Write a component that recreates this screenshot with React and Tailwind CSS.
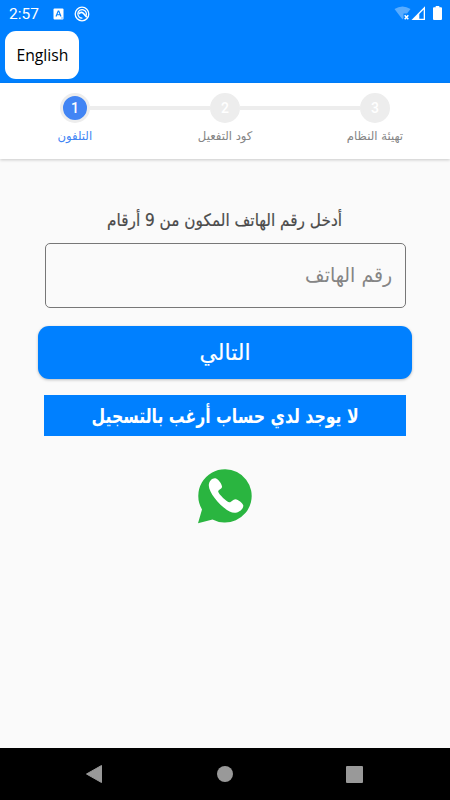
import React from 'react'
import clsx from 'clsx'

const steps = [
  { id: 1, label: 'التلفون' },
  { id: 2, label: 'كود التفعيل' },
  { id: 3, label: 'تهيئة النظام' },
]

function StatusBar() {
  return (
    <div className="flex h-7 items-center pr-2 pl-[9px] text-white">
      <span className="w-[31px] pt-px font-[Roboto] text-[15.5px] leading-none whitespace-nowrap">2:57</span>
      <svg className="ml-[13px]" width="11" height="12" viewBox="0 0 11 12">
        <rect x="0.5" y="0.5" width="10" height="11" rx="1" fill="#fff" />
        <path d="M3 8.5L5.2 3h.6L8 8.5M3.8 6.8h3.4M8.5 10h1" fill="none" stroke="#0080ff" strokeWidth="1.1" />
      </svg>
      <svg className="mb-px ml-[10px]" width="16" height="16" viewBox="0 0 16 16" fill="none" stroke="#fff">
        <circle cx="8" cy="8" r="6.8" strokeWidth="1.3" />
        <path d="M12 9.8A4.3 4.3 0 1 0 8.4 12.2" strokeWidth="1.3" />
        <path d="M4.8 8Q7.5 4.8 9.8 7.8L12.8 11.3" strokeWidth="1.7" />
      </svg>
      <div className="mb-[2px] ml-auto flex items-center">
        <svg width="17" height="15" viewBox="0 0 17 15">
          <path d="M0.5 3Q8.5-2.2 16.5 3L13 7.5H9.5V12L8.5 13.5Z" fill="#fff" fillOpacity="0.35" />
          <path d="M10.7 9.2l3.6 4M14.3 9.2l-3.6 4" stroke="#fff" strokeWidth="1.5" />
        </svg>
        <svg width="15" height="15" viewBox="0 0 15 15">
          <path d="M0.5 14H14V0.3Z" fill="#fff" />
          <path d="M8.3 8L12.7 3.4V12.7H8.3Z" fill="#0080ff" />
        </svg>
        <svg className="ml-[7px]" width="9" height="14" viewBox="0 0 9 14">
          <path d="M2.7 0h3.6v1.3H8a1 1 0 0 1 1 1V13a1 1 0 0 1-1 1H1a1 1 0 0 1-1-1V2.3a1 1 0 0 1 1-1h1.7Z" fill="#fff" />
        </svg>
      </div>
    </div>
  )
}

function Header() {
  return (
    <header className="h-[83px] bg-[#0080ff]">
      <StatusBar />
      <button className="mt-[3px] ml-[5px] flex h-[47.5px] w-[74px] items-center justify-center rounded-[11px] bg-white font-['Open_Sans'] text-[16px] text-black">
        <span className="scale-x-[0.98]">English</span>
      </button>
    </header>
  )
}

function Stepper() {
  return (
    <div className="grid h-[76px] grid-cols-3 bg-white shadow-[0_1px_3px_rgba(0,0,0,0.2)]" dir="ltr">
      {steps.map((step, i) => {
        const active = step.id === 1
        return (
          <div key={step.id} className="flex flex-col items-center pt-[9.5px]">
            <div className="flex w-full items-center">
              <div className={clsx('h-1 flex-1', i > 0 && 'bg-[#ededed]')} />
              <div
                className={clsx(
                  'flex size-[30.5px] items-center justify-center rounded-full border-[3px] border-[#ededed] font-[Roboto] text-sm font-medium text-white',
                  active ? 'bg-[#4285f4]' : 'bg-[#ededed]',
                )}
              >
                {step.id}
              </div>
              <div className={clsx('h-1 flex-1', i < 2 && 'bg-[#ededed]')} />
            </div>
            <span
              dir="rtl"
              className={clsx(
                "mt-[3px] scale-x-[0.97] font-['DejaVu_Sans',sans-serif] text-[12px] leading-5 whitespace-nowrap",
                active ? 'text-[#4285f4]' : 'text-[#858585]',
              )}
            >
              {step.label}
            </span>
          </div>
        )
      })}
    </div>
  )
}

function WhatsAppLogo() {
  return (
    <svg width="56" height="56" viewBox="0 0 56 56">
      <path d="M28.3 1.2A26.7 26.7 0 1 1 15.5 51.5L1 55.2L5 41.5A26.7 26.7 0 0 1 28.3 1.2Z" fill="#2ab540" />
      <path
        d="M11.8 17.5C11.8 12.5 15.8 9.7 18.5 10.3C21.5 11.5 24.5 15.5 25 18.5C25.3 21 21.2 21.5 21.2 23.7C21.7 26 30 34.3 32.5 34.3C34.5 34.3 36 31.2 38.5 31.2C41 31.5 45.8 35 46.3 37.5C46.5 41 42 44.8 37.5 44.8C28 44.5 11.8 26 11.8 17.5Z"
        fill="#fff"
      />
    </svg>
  )
}

function NavBar() {
  return (
    <nav className="flex h-[52px] items-center justify-between bg-black pr-[87px] pl-[86px]">
      <svg width="16" height="18" viewBox="0 0 16 18">
        <path d="M0.5 9L15.5 0.5V17.5Z" fill="#999" stroke="#999" strokeLinejoin="round" />
      </svg>
      <div className="ml-px size-4 rounded-full bg-[#999]" />
      <div className="size-[17px] rounded-[1px] bg-[#999]" />
    </nav>
  )
}

export default function App() {
  return (
    <div className="flex h-[800px] w-[450px] flex-col overflow-hidden bg-[#fafafa] font-['DejaVu_Sans',sans-serif]">
      <Header />
      <Stepper />
      <main className="flex flex-1 flex-col items-center" dir="rtl">
        <p className="mt-[47px] ml-[-1px] scale-x-[0.9] text-[17px] leading-7 whitespace-nowrap text-[#4a4a4a] [-webkit-text-stroke:0.2px]">
          أدخل رقم الهاتف المكون من 9 أرقام
        </p>
        <div className="mt-[9px] flex h-[64.5px] w-[361px] items-center rounded-[5px] border border-[#777] px-3 text-[20px] text-[#858585]">
          <span className="origin-right scale-x-[0.945]">رقم الهاتف</span>
        </div>
        <button className="mt-[18.5px] flex h-[52.5px] w-[374px] items-center justify-center rounded-[11px] bg-[#0080ff] text-[22px] text-white shadow-[0_1px_3px_rgba(0,0,0,0.25)] [-webkit-text-stroke:0.2px]">
          التالي
        </button>
        <button className="mt-[16.5px] flex h-[41px] w-[362px] items-center justify-center bg-[#0080ff] text-[20px] font-bold whitespace-nowrap text-white">
          <span className="scale-x-[0.785]">لا يوجد لدي حساب أرغب بالتسجيل</span>
        </button>
        <div className="mt-[32px]">
          <WhatsAppLogo />
        </div>
      </main>
      <NavBar />
    </div>
  )
}
